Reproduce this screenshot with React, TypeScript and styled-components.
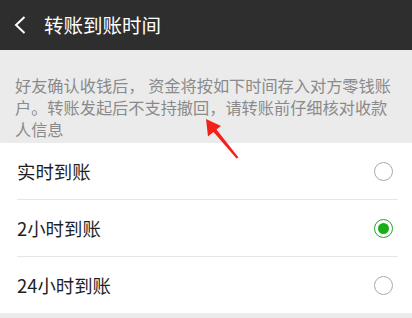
import React from "react";
import styled, { createGlobalStyle } from "styled-components";

const Global = createGlobalStyle`
  html, body { margin: 0; padding: 0; background: #ebebeb; }
  body { font-family: "Noto Sans CJK SC", "Noto Sans", sans-serif; }
`;

const Page = styled.div`
  position: relative;
  width: 412px;
  height: 318px;
  background: #ebebeb;
  overflow: hidden;
`;

const Header = styled.div`
  height: 50px;
  background: #2e2e2e;
  display: flex;
  align-items: center;
  padding-left: 13px;
  gap: 17px;
  color: #fff;
`;

const Title = styled.div`
  font-size: 19.5px;
  letter-spacing: 0px;
  line-height: 1;
  margin-top: -1px;
`;

const Notice = styled.div`
  padding: 24px 10px 3px 15px;
  font-size: 16.2px;
  line-height: 22px;
  color: #8a8a8a;
`;

const List = styled.div`
  background: #fff;
`;

const Row = styled.div`
  height: 56px;
  display: flex;
  align-items: center;
  justify-content: space-between;
  padding: 0 19px 0 17px;
  font-size: 18.4px;
  color: #1f1f1f;
`;

const Divider = styled.div`
  height: 1px;
  background: #e6e6e6;
  margin: 0 14px 0 17px;
`;

const Radio = styled.div<{ $on?: boolean }>`
  width: 19px;
  height: 19px;
  box-sizing: border-box;
  border-radius: 50%;
  border: 1.6px solid ${(p) => (p.$on ? "#1aad19" : "#a9a9a9")};
  display: flex;
  align-items: center;
  justify-content: center;
  &::after {
    content: "";
    display: ${(p) => (p.$on ? "block" : "none")};
    width: 11px;
    height: 11px;
    border-radius: 50%;
    background: #1aad19;
  }
`;

const Arrow = styled.svg`
  position: absolute;
  left: 0;
  top: 0;
  pointer-events: none;
`;

const options = [
  { label: "实时到账", on: false },
  { label: "2小时到账", on: true },
  { label: "24小时到账", on: false },
];

export default function App() {
  return (
    <Page>
      <Global />
      <Header>
        <svg width="14" height="20" viewBox="0 0 14 20">
          <path d="M11.5 2 L3 10 L11.5 18" fill="none" stroke="#fff" strokeWidth="2" />
        </svg>
        <Title>转账到账时间</Title>
      </Header>
      <Notice>
        好友确认收钱后， 资金将按如下时间存入对方零钱账户。转账发起后不支持撤回，请转账前仔细核对收款人信息
      </Notice>
      <List>
        {options.map((o, i) => (
          <React.Fragment key={o.label}>
            {i > 0 && <Divider />}
            <Row>
              <span>{o.label}</span>
              <Radio $on={o.on} />
            </Row>
          </React.Fragment>
        ))}
      </List>
      <Arrow width="412" height="318" viewBox="0 0 412 318">
        <polygon
          points="206,119 221,126 216.5,129.5 238.5,157.5 236.5,158.5 213.5,132 208,136.5"
          fill="#f2221b"
        />
      </Arrow>
    </Page>
  );
}
